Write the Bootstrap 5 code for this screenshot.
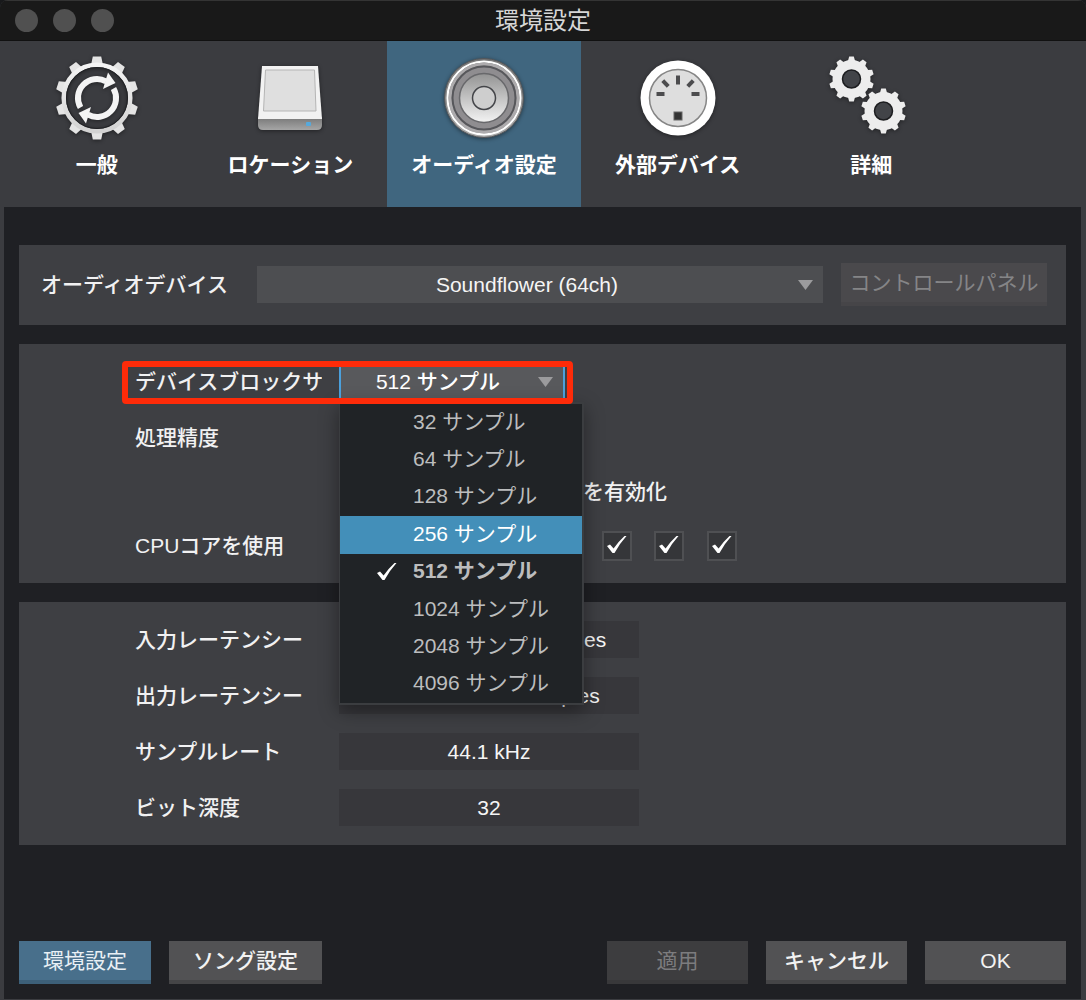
<!DOCTYPE html>
<html lang="ja">
<head>
<meta charset="utf-8">
<meta name="viewport" content="width=device-width, initial-scale=1">
<title>環境設定</title>
<link href="https://cdn.jsdelivr.net/npm/bootstrap@5.3.0/dist/css/bootstrap.min.css" rel="stylesheet">
<style>
  :root {
    --frame: #3b3c40;
    --panel: #3e3f43;
    --well: #1f2024;
    --accent: #40667f;
    --check: url("data:image/svg+xml,%3Csvg xmlns='http://www.w3.org/2000/svg' viewBox='0 0 30 30'%3E%3Cpath fill='%23fff' d='M5 15L8 13.500L11.600 17.500Q16 11 22.500 5H24.500Q18 12 12.500 22L10.500 22Z'/%3E%3C/svg%3E");
  }
  body {
    background: #18191b;
    color: #f1f1f2;
    font-family: "Liberation Sans", "Noto Sans CJK JP", sans-serif;
    font-size: 21px;
    font-weight: 500;
    line-height: 26px;
  }
  .window { background: var(--frame); border-radius: 8px 8px 0 0; overflow: hidden; }
  .titlebar { height: 41px; background: #191919; border-top: 1px solid #343434; border-bottom: 1px solid #111; }
  .titlebar h1 { font-size: 24px; line-height: 40px; color: #d6d6d6; }
  .lights { left: 15px; gap: 15px; }
  .lights span { width: 23px; height: 23px; border-radius: 50%; background: #505050; }

  .tabs { max-width: 968px; }
  .tab-btn { flex: 1 1 0; height: 166px; padding: 15px 0 0; gap: 12px; border: 0; background: transparent; color: #fff; font-weight: 700; }
  .tab-btn svg { width: 84px; height: 84px; flex: none; overflow: visible; filter: drop-shadow(0 1px 2px rgba(0,0,0,.45)); }
  .tab-btn.active { background: var(--accent); }

  .well { background: var(--well); margin: 0 5px 1px 4px; padding: 38px 15px 15px; }
  .panel { background: var(--panel); }
  .panel + .panel { margin-top: 19px; }
  .device-row { padding: 18px 19px 19px 22px; gap: 18px; }
  .device-row label { width: 198px; flex: none; }

  .pick { height: 37px; padding: 0 26px 0 0; border: 0; border-radius: 0; color: #f5f5f5; font-size: 21px; font-weight: 500; line-height: 26px;
    text-align: center; text-align-last: center; background-color: #4d4e51;
    background-image: url("data:image/svg+xml,%3Csvg xmlns='http://www.w3.org/2000/svg' viewBox='0 0 15 10'%3E%3Cpath fill='%239b9b9d' d='M0 0H15L7.500 10Z'/%3E%3C/svg%3E");
    background-size: 15px 10px; background-position: right 10px center; }
  .device-row .pick { width: 0; }
  .pick.open { width: 226px; color: #fff; background-color: #58595c; border-left: 2px solid #4ba0dc; border-right: 2px solid #4ba0dc; padding-right: 28px; }

  .push { min-width: 141px; height: 43px; padding: 0 24px 4px; border: 0; border-radius: 0; color: #f2f2f2; font-size: 21px; font-weight: 500; line-height: 26px;
    background: #525254; box-shadow: inset 0 -4px #454547; }
  .push.primary { background: #486f8b; box-shadow: inset 0 -4px #3d6079; min-width: 132px; color: #e9f0f5; }
  .push:disabled { background: #3d3d3f; box-shadow: inset 0 -4px #38383a; color: #7c7c7e; opacity: 1; }
  .panel .push:disabled { background: #4a494c; box-shadow: inset 0 -4px #464548; color: #858587; padding: 0 8px 4px; width: 206px; }
  .bottom-bar { gap: 18px; }

  .settings { padding: 19px 0 19px 116px; gap: 19px; }
  .setting { height: 37px; }
  .setting.short { height: 33px; }
  .setting .caption { width: 204px; flex: none; }
  .setting .clipped { width: 187px; margin-right: 17px; overflow: hidden; white-space: nowrap; }
  .readout { width: 300px; height: 37px; padding: 0; border: 0; text-align: center; color: #f5f5f5; font-weight: 500; background: #37373b; outline: 0; }
  .box.form-check-input { width: 30px; height: 30px; margin: 0; flex: none; border: 2px solid #4f5053; border-radius: 0; background: #353639 var(--check) center / 30px 30px no-repeat; }
  .cores { width: 398px; }

  .callout { left: 103px; top: 17px; width: 451px; height: 43px; border: 6px solid #fe2b09; border-radius: 4px; z-index: 30; pointer-events: none; }
  .choices { left: 320px; top: 58px; width: 245px; height: 303px; z-index: 20; background: #202326; border: 2px solid #3b3d40; border-left-width: 1px; box-shadow: 0 6px 18px rgba(0,0,0,.4); }
  .choices li { flex: 1 1 0; }
  .choice { width: 100%; height: 100%; padding: 0 0 2px 73px; border: 0; text-align: left; color: #bcbdbe; font-weight: 400; background: transparent; position: relative; line-height: 26px; }
  .choice.hot { background: #438fb9; color: #fff; }
  .choice.chosen { font-weight: 700; }
  .choice.chosen::before { content: ""; position: absolute; left: 32px; top: 4px; width: 30px; height: 30px; background: var(--check); }
</style>
<script src="https://cdn.jsdelivr.net/npm/bootstrap@5.3.0/dist/js/bootstrap.bundle.min.js"></script>
</head>
<body>
<div class="window d-flex flex-column min-vh-100">
  <header class="titlebar position-relative">
    <div class="lights position-absolute top-0 h-100 d-flex align-items-center" aria-hidden="true"><span></span><span></span><span></span></div>
    <h1 class="m-0 fw-normal text-center">環境設定</h1>
  </header>

  <nav class="tabs w-100 d-flex" aria-label="設定カテゴリー">
    <button class="tab-btn d-flex flex-column align-items-center justify-content-start" type="button">
      <svg viewBox="-42 -42 84 84" aria-hidden="true">
        <defs>
          <linearGradient id="metal" x1="0" y1="0" x2="0" y2="1"><stop offset="0" stop-color="#f4f4f4"/><stop offset="1" stop-color="#d2d2d2"/></linearGradient>
          <path id="tooth" d="M-6 -33L-4.200 -41.500H4.200L6 -33Z" fill="#e4e4e4"/>
          <g id="turn"><path d="M-16.500 9.500A19 19 0 0 1 9 -16.700" fill="none" stroke="#f4f4f4" stroke-width="6"/><path d="M11 -25.500L18.500 -15L6 -9Z" fill="#f4f4f4"/></g>
        </defs>
        <use href="#tooth"/><use href="#tooth" transform="rotate(36)"/><use href="#tooth" transform="rotate(72)"/><use href="#tooth" transform="rotate(108)"/><use href="#tooth" transform="rotate(144)"/><use href="#tooth" transform="rotate(180)"/><use href="#tooth" transform="rotate(216)"/><use href="#tooth" transform="rotate(252)"/><use href="#tooth" transform="rotate(288)"/><use href="#tooth" transform="rotate(324)"/>
        <circle r="33.300" fill="none" stroke="url(#metal)" stroke-width="4.500"/>
        <circle r="30.500" fill="none" stroke="#222326" stroke-width="1"/>
        <use href="#turn"/><use href="#turn" transform="rotate(180)"/>
      </svg>
      <span>一般</span>
    </button>
    <button class="tab-btn d-flex flex-column align-items-center justify-content-start" type="button">
      <svg viewBox="0 0 84 84" aria-hidden="true">
        <defs><linearGradient id="front" x1="0" y1="0" x2="0" y2="1"><stop offset="0" stop-color="#777"/><stop offset="1" stop-color="#a5a5a5"/></linearGradient></defs>
        <path d="M10 61H74V69Q74 74 69 74H15Q10 74 10 69Z" fill="url(#front)"/>
        <path d="M14 10H70L74 63H10Z" fill="#f2f2f2"/>
        <path d="M17.500 14H66.500L68 55H15.500Z" fill="#dfdfdf" stroke="#b5b5b5"/>
        <rect x="58" y="66" width="5" height="4" rx="1" fill="#56a9dc"/>
      </svg>
      <span>ロケーション</span>
    </button>
    <button class="tab-btn active d-flex flex-column align-items-center justify-content-start" type="button" aria-current="page">
      <svg viewBox="-42 -42 84 84" aria-hidden="true">
        <defs>
          <linearGradient id="cone" x1="0" y1="0" x2="0" y2="1"><stop offset="0" stop-color="#939393"/><stop offset="1" stop-color="#f3f3f3"/></linearGradient>
          <linearGradient id="rim" x1="0" y1="0" x2="0" y2="1"><stop offset="0" stop-color="#777"/><stop offset="1" stop-color="#aaa"/></linearGradient>
        </defs>
        <circle r="39.500" fill="url(#rim)" stroke="#55575a" stroke-width="1"/>
        <circle r="36.500" fill="none" stroke="#fff" stroke-width="2"/>
        <circle r="34" fill="none" stroke="#adabad" stroke-width="3"/>
        <circle r="31.500" fill="#8f8d90" stroke="#57575b" stroke-width="2"/>
        <circle r="24.500" fill="url(#cone)" stroke="#68686b" stroke-width="1.500"/>
        <circle r="11.500" fill="#cecece" stroke="#444549" stroke-width="1.500"/>
      </svg>
      <span>オーディオ設定</span>
    </button>
    <button class="tab-btn d-flex flex-column align-items-center justify-content-start" type="button">
      <svg viewBox="-42 -42 84 84" aria-hidden="true">
        <circle r="37.500" fill="#fff"/>
        <circle r="28.500" fill="#dedede" stroke="#858585" stroke-width="1.500"/>
        <g fill="#4c4c4e"><rect x="-2" y="-22.500" width="4" height="9"/><rect x="-21.500" y="-6" width="8" height="4"/><rect x="13.500" y="-6" width="8" height="4"/>
          <rect x="-2" y="-4" width="4" height="8" transform="translate(-12.500 -14.500) rotate(-43)"/><rect x="-2" y="-4" width="4" height="8" transform="translate(12.500 -14.500) rotate(43)"/>
          <rect x="-4" y="14" width="8" height="8" fill="#333" stroke="#666"/></g>
      </svg>
      <span>外部デバイス</span>
    </button>
    <button class="tab-btn d-flex flex-column align-items-center justify-content-start" type="button">
      <svg viewBox="0 0 84 84" aria-hidden="true">
        <defs>
          <path id="cog" d="M-3.600 -18L-2.300 -22.500H2.300L3.600 -18Z" fill="#ededed"/>
          <g id="gear"><use href="#cog"/><use href="#cog" transform="rotate(36)"/><use href="#cog" transform="rotate(72)"/><use href="#cog" transform="rotate(108)"/><use href="#cog" transform="rotate(144)"/><use href="#cog" transform="rotate(180)"/><use href="#cog" transform="rotate(216)"/><use href="#cog" transform="rotate(252)"/><use href="#cog" transform="rotate(288)"/><use href="#cog" transform="rotate(324)"/>
            <circle r="14" fill="none" stroke="#ededed" stroke-width="10"/><circle r="9" fill="#424448" stroke="#1d1e20" stroke-width="1.500"/></g>
        </defs>
        <use href="#gear" transform="translate(22.500 23)"/><use href="#gear" transform="translate(54.500 55)"/>
      </svg>
      <span>詳細</span>
    </button>
  </nav>

  <main class="well flex-grow-1 d-flex flex-column">
    <section class="panel device-row d-flex align-items-center">
      <label for="device">オーディオデバイス</label>
      <select id="device" class="form-select pick flex-fill"><option>Soundflower (64ch)</option></select>
      <button class="btn push flex-shrink-0 text-nowrap fw-normal" type="button" disabled>コントロールパネル</button>
    </section>

    <section class="panel settings d-flex flex-column position-relative">
      <div class="setting d-flex align-items-center">
        <label class="caption clipped" for="block">デバイスブロックサイズ</label>
        <select id="block" class="form-select pick open"><option>512 サンプル</option></select>
      </div>
      <div class="setting d-flex align-items-center">
        <label class="caption" for="precision">処理精度</label>
        <select id="precision" class="form-select pick open border-0"><option>シングル (32 Bit)</option></select>
      </div>
      <div class="setting short d-flex align-items-center">
        <span class="caption"></span>
        <input class="form-check-input box" type="checkbox" id="multi" checked>
        <label class="ps-1 text-nowrap" for="multi">マルチプロセッシングを有効化</label>
      </div>
      <div class="setting d-flex align-items-center">
        <span class="caption">CPUコアを使用</span>
        <div class="cores d-flex justify-content-between">
          <input class="form-check-input box" type="checkbox" checked aria-label="コア 1">
          <input class="form-check-input box" type="checkbox" checked aria-label="コア 2">
          <input class="form-check-input box" type="checkbox" checked aria-label="コア 3">
          <input class="form-check-input box" type="checkbox" checked aria-label="コア 4">
          <input class="form-check-input box" type="checkbox" checked aria-label="コア 5">
          <input class="form-check-input box" type="checkbox" checked aria-label="コア 6">
          <input class="form-check-input box" type="checkbox" checked aria-label="コア 7">
          <input class="form-check-input box" type="checkbox" checked aria-label="コア 8">
        </div>
      </div>
      <div class="callout position-absolute"></div>
      <ul class="choices position-absolute list-unstyled m-0 d-flex flex-column">
        <li><button class="choice" type="button">32 サンプル</button></li>
        <li><button class="choice" type="button">64 サンプル</button></li>
        <li><button class="choice" type="button">128 サンプル</button></li>
        <li><button class="choice hot" type="button">256 サンプル</button></li>
        <li><button class="choice chosen" type="button">512 サンプル</button></li>
        <li><button class="choice" type="button">1024 サンプル</button></li>
        <li><button class="choice" type="button">2048 サンプル</button></li>
        <li><button class="choice" type="button">4096 サンプル</button></li>
      </ul>
    </section>

    <section class="panel settings d-flex flex-column">
      <div class="setting d-flex align-items-center"><label class="caption" for="in">入力レーテンシー</label><input id="in" class="readout" readonly value="23.22 ms / 1024 samples"></div>
      <div class="setting d-flex align-items-center"><label class="caption" for="out">出力レーテンシー</label><input id="out" class="readout" readonly value="11.61 ms / 512 samples"></div>
      <div class="setting d-flex align-items-center"><label class="caption" for="rate">サンプルレート</label><input id="rate" class="readout" readonly value="44.1 kHz"></div>
      <div class="setting d-flex align-items-center"><label class="caption" for="depth">ビット深度</label><input id="depth" class="readout" readonly value="32"></div>
    </section>

    <footer class="bottom-bar d-flex mt-auto">
      <button class="btn push primary fw-normal" type="button">環境設定</button>
      <button class="btn push" type="button">ソング設定</button>
      <button class="btn push ms-auto fw-normal" type="button" disabled>適用</button>
      <button class="btn push px-0" type="button">キャンセル</button>
      <button class="btn push" type="button">OK</button>
    </footer>
  </main>
</div>
</body>
</html>
